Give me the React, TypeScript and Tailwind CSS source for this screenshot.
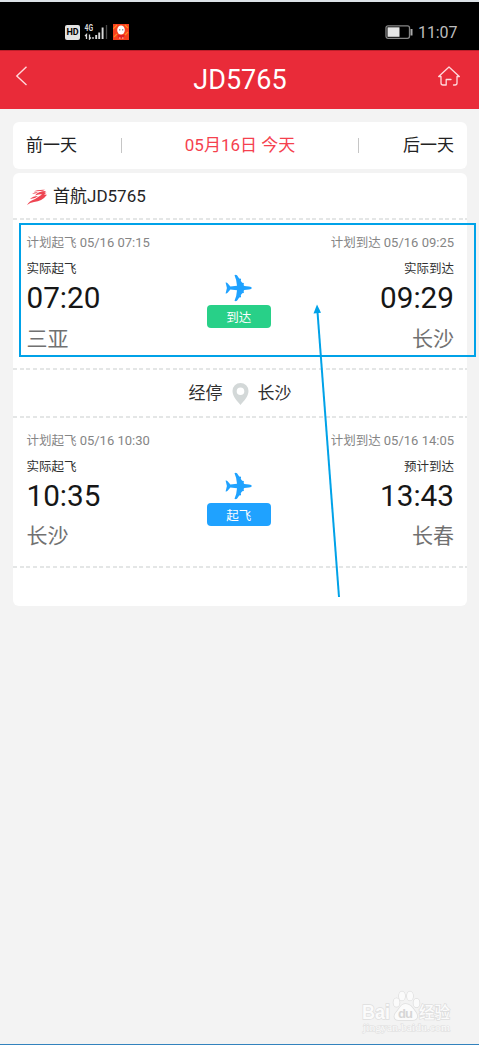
import React from "react";

interface Stop {
    label: string;
    plan: string;
    actualLabel: string;
    time: string;
    city: string;
}

interface Leg {
    id: number;
    from: Stop;
    to: Stop;
    status: string;
    badge: string;
    cityGap: string;
}

const legs: Leg[] = [
    {
        id: 1,
        from: { label: "计划起飞", plan: "05/16 07:15", actualLabel: "实际起飞", time: "07:20", city: "三亚" },
        to: { label: "计划到达", plan: "05/16 09:25", actualLabel: "实际到达", time: "09:29", city: "长沙" },
        status: "到达",
        badge: "bg-[#28d088]",
        cityGap: "mt-[10px]",
    },
    {
        id: 2,
        from: { label: "计划起飞", plan: "05/16 10:30", actualLabel: "实际起飞", time: "10:35", city: "长沙" },
        to: { label: "计划到达", plan: "05/16 14:05", actualLabel: "预计到达", time: "13:43", city: "长春" },
        status: "起飞",
        badge: "bg-[#1fa2ff]",
        cityGap: "mt-[9px]",
    },
];

const DashedLine: React.FC = () => (
    <div className="h-[2px] w-full shrink-0 bg-[repeating-linear-gradient(90deg,#e4e6e6_0,#e4e6e6_4px,transparent_4px,transparent_6.65px)]" />
);

const PlaneIcon: React.FC = () => (
    <svg className="h-7 w-[27px]" viewBox="0 0 27 28" fill="#1fa2ff">
        <path d="M0.600 8.500Q1.800 8.200 2.600 9.200L5.400 12.500L12 11.700Q11.700 6 9.500 1.200Q10.700 0.300 12 1.200L14.200 4.600L16 4.800V6.600H15.500L17.200 8.800L18.800 9V10.700H18.400L19.300 11.900L24 12.400Q26.800 12.800 26.800 14Q26.800 15.200 24 15.600L19.300 16.100L18.400 17.300H18.800V19L17.200 19.200L15.500 21.400H16V23.200L14.200 23.400L12 26.800Q10.700 27.700 9.500 26.800Q11.700 22 12 16.300L5.400 15.500L2.600 18.800Q1.800 19.800 0.600 19.500L1.900 14z" />
    </svg>
);

const StatusBar: React.FC = () => (
    <div className="flex h-12 items-center bg-black pt-3 pr-[22px] pl-[65px]">
        <div className="grid h-[15px] w-[15px] place-items-center rounded-[2px] bg-[#e2e2e2] text-[9px] leading-none font-bold tracking-[-0.2px] text-black">HD</div>
        <svg className="ml-1 h-4 w-6" viewBox="0 0 24 16">
            <text x="0.5" y="7" fontSize="9" fontWeight="700" textLength="8.500" lengthAdjust="spacingAndGlyphs" fill="#d9d9d9">4G</text>
            <path d="M2.500 15v-4.500L1 12M5.500 10.500V15l1.500-1.500M9 15v-2" fill="none" stroke="#d9d9d9" strokeWidth="1.300" />
            <path d="M12.200 15v-4M15.200 15V8.500M18.600 15V3.500" stroke="#d9d9d9" strokeWidth="1.900" />
            <path d="M22.500 15V1" stroke="#4a4a4a" strokeWidth="1.300" />
        </svg>
        <svg className="ml-[5px] h-4 w-4" viewBox="0 0 16 16">
            <path fill="#f8401d" d="M0 0h16v16H0z" />
            <path d="M0 5l4-4M12 1l3 3M1 13l3-3M12 11l3-3" stroke="#ff8a23" strokeWidth="1.200" />
            <ellipse cx="8" cy="6" rx="3.800" ry="4.500" fill="#fff" />
            <path d="M4.500 11h7l-1 3H5.500z" fill="#e22022" />
            <path d="M6 14h1.500M9 14h1.500" stroke="#fbd0c8" />
            <circle cx="6.800" cy="5.800" r=".6" fill="#333" />
            <circle cx="9.800" cy="5.800" r=".6" fill="#333" />
        </svg>
        <svg className="ml-auto h-[14px] w-7" viewBox="0 0 28 14">
            <rect x="1" y="0.800" width="23.500" height="12.500" rx="2" fill="none" stroke="#858585" strokeWidth="1.300" />
            <rect x="2.500" y="2.300" width="12" height="9.500" fill="#e5e5e5" />
            <path d="M26.500 4v6.500" stroke="#aaa" strokeWidth="2" />
        </svg>
        <span className="ml-[5px] w-[39px] pt-px text-[16px] leading-5 tracking-[-0.1px] whitespace-nowrap text-[#bdbdbd]">11:07</span>
    </div>
);

const Header: React.FC = () => (
    <header className="flex h-[59px] items-start justify-between border-t border-[#bd1e2a] bg-[#e92b39] pr-[19px] pl-[15px] text-white">
        <svg className="mt-[15px] h-5 w-[26px]" viewBox="0 0 26 20" fill="none" stroke="#ffd9dc" strokeWidth="1.400">
            <path d="M11.500 0.800L1.800 10l9.700 9" />
        </svg>
        <h1 className="mt-[13px] pl-px text-[27px] leading-[33px]">JD5765</h1>
        <svg className="mt-[15px] h-5 w-[22px]" viewBox="0 0 22 20" fill="none" stroke="#ffd9dc" strokeWidth="1.300" strokeLinejoin="round" strokeLinecap="round">
            <path d="M0.700 10.500L11 0.900l10.300 9.600H19v6.500q0 2-2 2h-1.500M0.700 10.500H3v6.500q0 2 2 2h3.200v-5.500H13" />
        </svg>
    </header>
);

interface StopProps {
    stop: Stop;
    align: string;
    cityGap: string;
}

const StopInfo: React.FC<StopProps> = ({ stop, align, cityGap }) => (
    <div className={`flex flex-col ${align}`}>
        <p className="text-[12.500px] leading-4 whitespace-nowrap text-[#858585]">
            {stop.label} <span className="text-[13px]">{stop.plan}</span>
        </p>
        <p className="mt-[10px] text-[12.500px] leading-4 text-[#303030]">{stop.actualLabel}</p>
        <p className="mt-1 text-[29.700px] leading-[34px] text-[#161616]">{stop.time}</p>
        <p className={`text-[21px] leading-7 text-[#717171] ${cityGap}`}>{stop.city}</p>
    </div>
);

const FlightLeg: React.FC<{ leg: Leg }> = ({ leg }) => (
    <div className="flex h-[148px] justify-between pt-[15px] pr-[13px] pl-[13.500px]">
        <StopInfo stop={leg.from} align="w-[139px] items-start" cityGap={leg.cityGap} />
        <div className="flex w-16 flex-col items-center pt-[39px]">
            <PlaneIcon />
            <span className={`mt-[3px] grid h-[23px] w-16 place-items-center rounded pt-[3px] text-[12.500px] leading-none text-white ${leg.badge}`}>{leg.status}</span>
        </div>
        <StopInfo stop={leg.to} align="w-[142px] items-end" cityGap={leg.cityGap} />
    </div>
);

const Watermark: React.FC = () => (
    <svg className="absolute top-[986px] left-[358px] h-[50px] w-[96px] [paint-order:stroke]" viewBox="0 0 96 50" fill="#fbfbfb" stroke="#dedede" strokeWidth="1.500">
        <text x="4" y="33" fontFamily="Liberation Sans" fontSize="20" fontWeight="700" textLength="28" lengthAdjust="spacingAndGlyphs">Bai</text>
        <path d="M47.500 18c-5 0-6 5-9 8s-3 8 2 8h14c5 0 6-4 3-8s-5-8-10-8z" />
        <ellipse cx="38.500" cy="16.500" rx="3" ry="4.300" />
        <ellipse cx="44" cy="10" rx="3" ry="4.500" />
        <ellipse cx="52" cy="10" rx="3" ry="4.500" />
        <ellipse cx="58.500" cy="17" rx="3" ry="4.300" />
        <text x="40" y="32" fontFamily="Liberation Sans" fontSize="13" fontWeight="700" fill="#d6d6d6" stroke="none" textLength="15">du</text>
        <text x="61" y="32" fontSize="16" fontWeight="500" textLength="31" lengthAdjust="spacingAndGlyphs">经验</text>
        <text x="5" y="45" fontFamily="Liberation Serif" fontSize="11" strokeWidth="1" textLength="87" lengthAdjust="spacingAndGlyphs">jingyan.baidu.com</text>
    </svg>
);

const App: React.FC = () => {
    return (
        <main className="relative flex h-[1045px] w-[479px] flex-col overflow-hidden bg-[#f3f3f3] font-['Roboto','Noto_Sans_CJK_SC',sans-serif]">
            <div className="h-[2px] shrink-0 bg-[#dce2e7]" />
            <StatusBar />
            <Header />
            <nav className="mr-3 ml-[13px] mt-[13px] flex h-[47px] items-center rounded-[6px] bg-white px-[13px] text-[17px] text-[#222]">
                <span className="w-[95px]">前一天</span>
                <span className="mb-px h-[15px] w-px bg-[#c6c6c6]" />
                <span className="flex-1 text-center text-[#f5414e]">05月16日 今天</span>
                <span className="mb-px h-[15px] w-px bg-[#c6c6c6]" />
                <span className="w-[95px] text-right">后一天</span>
            </nav>
            <section className="mr-3 ml-[13px] mt-1 flex h-[433px] flex-col rounded-[6px] bg-white">
                <div className="flex h-[45px] items-center pt-[3px] pl-[13px] text-[17px] text-[#252525]">
                    <svg className="h-[18px] w-[23px]" viewBox="0 0 23 18" fill="#ee4552">
                        <path d="M1 17Q3 13 9 11l7-4.500q-1-1-7 1 3-4.500 11-4.500l-1.500 1.500 2 .2-2.500 1.800 3 .3Q16 13.500 8 14q-4 .5-7 3z" />
                        <path d="M8 3.500q3-2 11-1.700l-2 1zM6 6q2-2 6-2l-2 1.200zM4 11q3-3 8-3l-3 2z" />
                    </svg>
                    <span className="ml-1">首航JD5765</span>
                </div>
                <DashedLine />
                <FlightLeg leg={legs[0]} />
                <DashedLine />
                <div className="flex h-[46px] items-center justify-center pt-0.5 text-[17px] text-[#303030]">
                    <span>经停</span>
                    <svg className="mr-[9px] ml-[9px] h-[22px] w-[17px]" viewBox="0 0 17 22">
                        <path fill="#d3d8d8" fillRule="evenodd" d="M8.500 0A8 8 0 0 0 .5 8c0 5.500 5 10.500 8 14 3-3.500 8-8.500 8-14a8 8 0 0 0-8-8zm0 4.500a3.800 3.800 0 1 1 0 7.600 3.800 3.800 0 0 1 0-7.600z" />
                    </svg>
                    <span>长沙</span>
                </div>
                <DashedLine />
                <FlightLeg leg={legs[1]} />
                <DashedLine />
            </section>
            <Watermark />

            {/* highlight frame and pointer */}
            <div className="absolute top-[223px] left-[19px] h-[134px] w-[457px] border-2 border-[#00a2e8]" />
            <svg className="absolute top-[304px] left-[310px] h-[295px] w-[34px]" viewBox="0 0 34 295">
                <path d="M7.500 8L29 293" stroke="#00a2e8" strokeWidth="2" />
                <path d="M7 0.500L3.500 9.500l7.500-.7z" fill="#00a2e8" />
            </svg>
            <div className="mt-auto h-px shrink-0 bg-[#3282bd]" />
        </main>
    );
};
export default App;
